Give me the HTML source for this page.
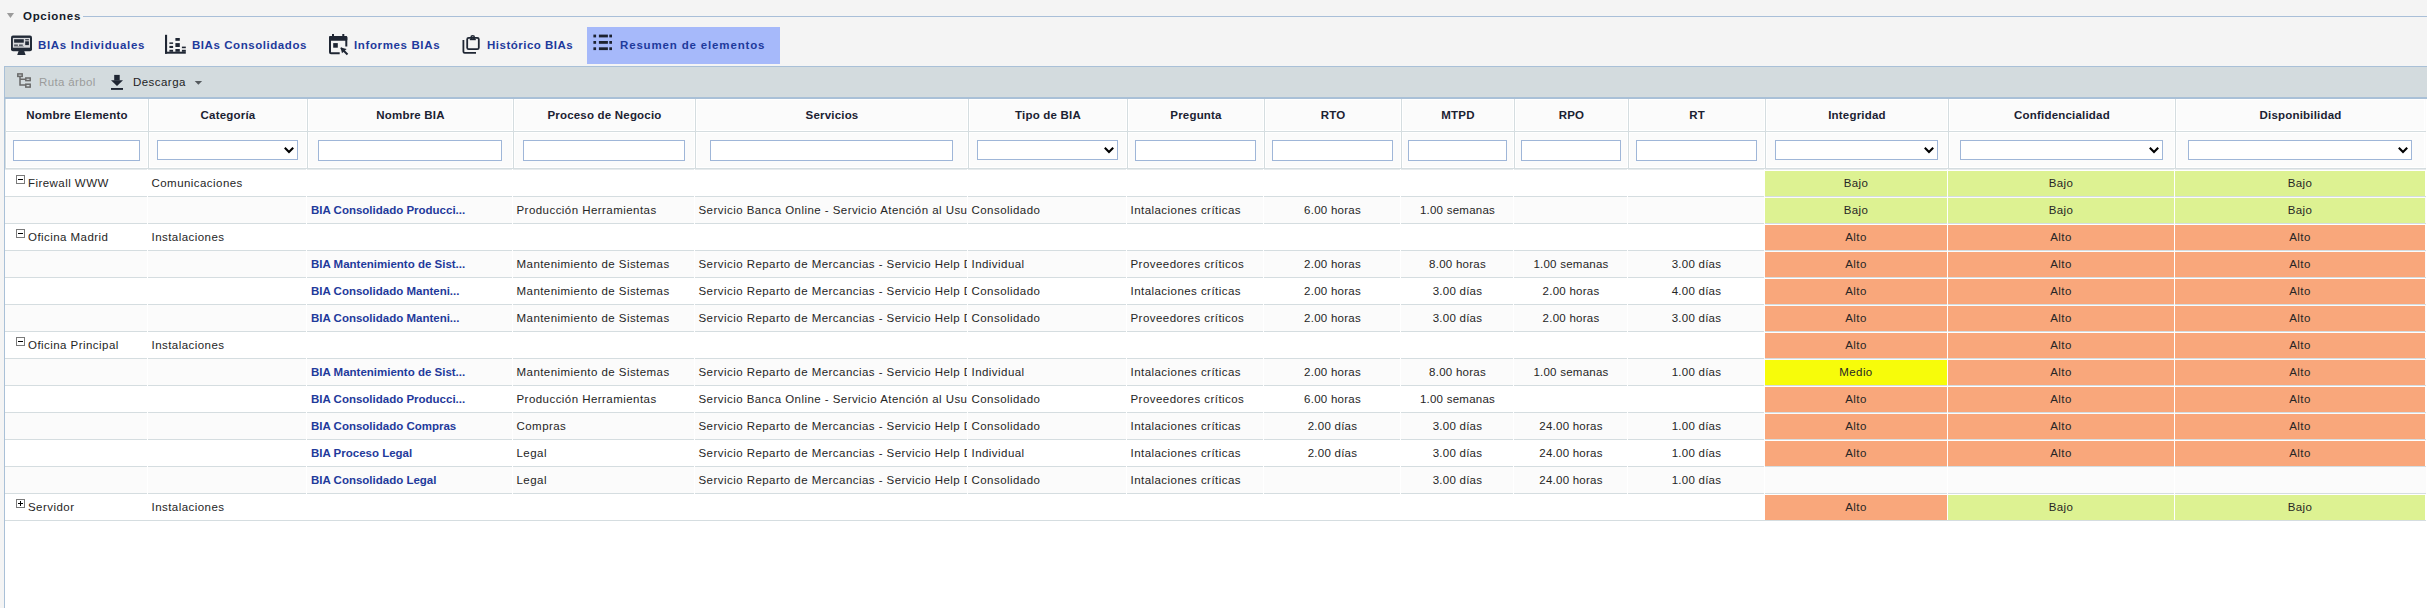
<!DOCTYPE html>
<html><head><meta charset="utf-8"><style>
*{box-sizing:border-box;margin:0;padding:0}
html,body{width:2427px;height:608px;overflow:hidden;background:#f4f4f4;font-family:"Liberation Sans",sans-serif;color:#222}
.abs{position:absolute;white-space:nowrap}
#icons{position:absolute;left:0;top:0;z-index:5}
#leg{position:absolute;left:23px;top:6px;font-size:11.5px;font-weight:bold;color:#141b2b;line-height:20px;letter-spacing:0.7px}
#legline{position:absolute;left:83px;top:16px;right:0;height:1px;background:#a9bfd8}
.tab{position:absolute;top:27px;height:37px;font-size:11.5px;font-weight:bold;color:#1e3a9c;line-height:37px;white-space:nowrap}
#seltab{position:absolute;left:587px;top:27px;width:193px;height:37px;background:#a6b9fa}
#tb{position:absolute;z-index:2;left:4px;top:66px;width:2423px;height:33px;background:#d3dbde;border-top:1px solid #a9c0d7;border-bottom:2px solid #a9c0d7;border-left:1px solid #a9c0d7}
#main{position:absolute;left:4px;top:98px;width:2423px;height:510px;background:#fff;border-left:1px solid #a9c0d7}
.hrow{position:absolute;left:0;top:0;width:2421px;height:34px;background:#fbfbfb;border-bottom:1px solid #d5dde0}
.frow{position:absolute;left:0;top:34px;width:2421px;height:37px;background:#fbfbfb;border-bottom:1px solid #d5dde0}
.hc{position:absolute;top:1px;height:32px;line-height:33px;box-shadow:inset 1px 1px 0 #fff,inset -1px -1px 0 #fff;text-align:center;font-size:11.5px;font-weight:bold;color:#1b2232;letter-spacing:0.2px;border-left:1px solid #d5dde0;white-space:nowrap}
.fb{position:absolute;top:0;height:36px;border-left:1px solid #d5dde0;box-shadow:inset 1px 1px 0 #fff,inset -1px -1px 0 #fff}
.inp,.sel{position:absolute;top:8px;height:21px;background:#fff;border:1px solid #9fb6d8}
.sel{height:20px}
.chev{position:absolute;right:2px;top:5px}
.row{position:absolute;left:0;width:2421px;height:27px;background:#fff;border-top:1px solid #d5dde0}
.row.alt{background:#fbfbfb}.row.first{border-top-color:#e6eaec}
.vl{position:absolute;top:-1px;width:1px;height:27px;background:#fff}
.bc{position:absolute;top:0;height:26px;line-height:26px;font-size:11.5px;padding-left:3.5px;white-space:nowrap;overflow:hidden;color:#252525;letter-spacing:0.45px}
.bc.ctr{text-align:center;padding-left:0;letter-spacing:0.25px}
.bc.lnk{font-weight:bold;color:#1f3a9b;font-size:11.5px;letter-spacing:0;padding-left:4px}
.bc.nm{padding-left:0}
.col{position:absolute;top:1px;height:25px;line-height:25px;text-align:center;font-size:11.5px;color:#262626;letter-spacing:0.4px}
.col.g{background:#ddf292}
.col.o{background:#f9a77b}
.col.y{background:#f7fc0a}
.tgw{position:absolute;top:5px;width:9px;height:9px}
.tg{position:absolute;left:0;top:0;width:9px;height:9px;border:1px solid #7a7a7a;background:#fff}
.tg .h{position:absolute;left:1px;top:3px;width:5px;height:1.3px;background:#000}
.tg .v{position:absolute;left:2.8px;top:1px;width:1.3px;height:5px;background:#000}
</style></head><body>

<svg id="icons" width="2427" height="100" viewBox="0 0 2427 100">
 <!-- monitor -->
 <g fill="#222a37">
  <rect x="11" y="35.6" width="21" height="15.6" rx="2"/>
  <path d="M17.2 55 L25.6 55 L24.2 51 L18.6 51 Z"/>
 </g>
 <rect x="12.9" y="37.9" width="17.1" height="9.8" fill="#d9dadd"/>
 <g fill="#222a37">
  <rect x="14.1" y="39.2" width="9.7" height="3.5"/>
  <rect x="25.2" y="39.2" width="3.7" height="1.1"/>
  <rect x="25.2" y="41.3" width="3.7" height="3.8"/>
  <rect x="14.1" y="44.6" width="3.8" height="1.1"/>
  <rect x="19" y="44.6" width="3.8" height="1.1"/>
  <rect x="14.1" y="46.3" width="9.7" height="0.6" opacity="0.5"/>
 </g>
 <!-- bar chart -->
 <g fill="#1f2633">
  <rect x="165" y="34.8" width="2.1" height="18.9"/>
  <rect x="165" y="51.7" width="20.8" height="2"/>
  <rect x="169.4" y="42.4" width="3.7" height="1.5"/>
  <rect x="169.4" y="45.9" width="3.7" height="2.1"/>
  <rect x="169.4" y="49.8" width="3.7" height="2"/>
  <rect x="175.4" y="38" width="4.4" height="2.8"/>
  <rect x="175.4" y="43.1" width="4.4" height="3.9"/>
  <rect x="175.4" y="49" width="4.4" height="2.8"/>
  <rect x="181.9" y="46.6" width="3.9" height="1.6"/>
  <rect x="181.9" y="49.8" width="3.9" height="2"/>
 </g>
 <!-- calendar -->
 <g fill="none" stroke="#1f2633" stroke-width="2">
  <path d="M339.7 53.2 L331 53.2 Q330 53.2 330 52.2 L330 38 Q330 37 331 37 L345.3 37 Q346.3 37 346.3 38 L346.3 46.6"/>
  <path d="M341 48 L347.5 54.5" stroke-width="2"/>
 </g>
 <g fill="#1f2633">
  <rect x="329" y="36" width="18.3" height="4.8" rx="1.2"/>
  <rect x="332" y="34" width="2" height="3"/>
  <rect x="342.3" y="34" width="2" height="3"/>
  <rect x="333.2" y="43.1" width="4.6" height="4.6"/>
  <path d="M340.6 47.4 L346.6 48.9 L342 53.2 Z"/>
 </g>
 <!-- clipboard -->
 <g fill="none" stroke="#1f2633" stroke-width="1.8">
  <rect x="467.2" y="37.8" width="11.6" height="11.4" rx="1.5"/>
  <path d="M463.4 40.1 L463.4 51.6 Q463.4 52.9 464.7 52.9 L476 52.9"/>
  <circle cx="472.7" cy="37.5" r="1.75" stroke-width="1.4"/>
 </g>
 <rect x="469.8" y="38.8" width="6" height="1.4" fill="#1f2633"/>
 <!-- list -->
 <g fill="#1c2230">
  <rect x="593.4" y="34.6" width="2.7" height="2.8"/>
  <rect x="598.9" y="34.6" width="9" height="2.8"/>
  <rect x="609.3" y="34.6" width="2.7" height="2.8"/>
  <rect x="593.4" y="41" width="2.7" height="2.8"/>
  <rect x="598.9" y="41" width="9" height="2.8"/>
  <rect x="609.3" y="41" width="2.7" height="2.8"/>
  <rect x="593.4" y="47.3" width="2.7" height="2.8"/>
  <rect x="598.9" y="47.3" width="9" height="2.8"/>
  <rect x="609.3" y="47.3" width="2.7" height="2.8"/>
 </g>
 <!-- tree -->
 <g fill="none" stroke="#6a6a6a" stroke-width="1.5">
  <rect x="17.8" y="73.9" width="4.4" height="2.5"/>
  <rect x="25.8" y="78" width="4.4" height="2.6"/>
  <rect x="25.8" y="84.2" width="4.4" height="2.9"/>
  <path d="M20 76.5 L20 85 L25.5 85 M20 79.2 L25.5 79.2"/>
 </g>
 <!-- download -->
 <g fill="#1f2633">
  <rect x="114.2" y="74.9" width="5.5" height="5.6"/>
  <path d="M111 80.2 L123 80.2 L117 86 Z"/>
  <rect x="111" y="88" width="12" height="1.9"/>
 </g>
 <path d="M194.7 81.1 L202.1 81.1 L198.4 84.8 Z" fill="#555a5e"/>
 <!-- legend triangle -->
 <path d="M6.9 13.1 L14 13.1 L10.45 18 Z" fill="#9b9b9b"/>
</svg>

<div id="leg">Opciones</div>
<div id="legline"></div>
<div id="seltab"></div>
<div class="tab" style="left:38px;letter-spacing:0.66px">BIAs Individuales</div>
<div class="tab" style="left:192px;letter-spacing:0.56px">BIAs Consolidados</div>
<div class="tab" style="left:354px;letter-spacing:0.63px">Informes BIAs</div>
<div class="tab" style="left:487px;letter-spacing:0.5px">Histórico BIAs</div>
<div class="tab" style="left:620px;letter-spacing:0.84px">Resumen de elementos</div>
<div id="tb">
 <div class="abs" style="left:34px;top:7px;font-size:11.5px;color:#9b9b9b;line-height:16px;letter-spacing:0.35px">Ruta árbol</div>
 <div class="abs" style="left:128px;top:7px;font-size:11.5px;color:#1e1e1e;line-height:16px;letter-spacing:0.45px">Descarga</div>
</div>
<div id="main">
<div class="hrow"><div class="hc" style="left:0px;width:143px">Nombre Elemento</div><div class="hc" style="left:143px;width:159px">Categoría</div><div class="hc" style="left:302px;width:206px">Nombre BIA</div><div class="hc" style="left:508px;width:182px">Proceso de Negocio</div><div class="hc" style="left:690px;width:273px">Servicios</div><div class="hc" style="left:963px;width:159px">Tipo de BIA</div><div class="hc" style="left:1122px;width:137px">Pregunta</div><div class="hc" style="left:1259px;width:137px">RTO</div><div class="hc" style="left:1396px;width:113px">MTPD</div><div class="hc" style="left:1509px;width:114px">RPO</div><div class="hc" style="left:1623px;width:137px">RT</div><div class="hc" style="left:1760px;width:183px">Integridad</div><div class="hc" style="left:1943px;width:227px">Confidencialidad</div><div class="hc" style="left:2170px;width:250px">Disponibilidad</div></div>
<div class="frow"><div class="fb" style="left:0px;width:143px"></div><div class="fb" style="left:143px;width:159px"></div><div class="fb" style="left:302px;width:206px"></div><div class="fb" style="left:508px;width:182px"></div><div class="fb" style="left:690px;width:273px"></div><div class="fb" style="left:963px;width:159px"></div><div class="fb" style="left:1122px;width:137px"></div><div class="fb" style="left:1259px;width:137px"></div><div class="fb" style="left:1396px;width:113px"></div><div class="fb" style="left:1509px;width:114px"></div><div class="fb" style="left:1623px;width:137px"></div><div class="fb" style="left:1760px;width:183px"></div><div class="fb" style="left:1943px;width:227px"></div><div class="fb" style="left:2170px;width:250px"></div><div class="inp" style="left:8px;width:127px"></div><div class="sel" style="left:152px;width:141px"><svg class="chev" width="12" height="9" viewBox="0 0 12 9"><path d="M1.8 1.8 L6 6 L10.2 1.8" fill="none" stroke="#000" stroke-width="2.1"/></svg></div><div class="inp" style="left:313px;width:184px"></div><div class="inp" style="left:518px;width:162px"></div><div class="inp" style="left:705px;width:243px"></div><div class="sel" style="left:972px;width:141px"><svg class="chev" width="12" height="9" viewBox="0 0 12 9"><path d="M1.8 1.8 L6 6 L10.2 1.8" fill="none" stroke="#000" stroke-width="2.1"/></svg></div><div class="inp" style="left:1130px;width:121px"></div><div class="inp" style="left:1267px;width:121px"></div><div class="inp" style="left:1403px;width:99px"></div><div class="inp" style="left:1516px;width:100px"></div><div class="inp" style="left:1631px;width:121px"></div><div class="sel" style="left:1770px;width:163px"><svg class="chev" width="12" height="9" viewBox="0 0 12 9"><path d="M1.8 1.8 L6 6 L10.2 1.8" fill="none" stroke="#000" stroke-width="2.1"/></svg></div><div class="sel" style="left:1955px;width:203px"><svg class="chev" width="12" height="9" viewBox="0 0 12 9"><path d="M1.8 1.8 L6 6 L10.2 1.8" fill="none" stroke="#000" stroke-width="2.1"/></svg></div><div class="sel" style="left:2183px;width:224px"><svg class="chev" width="12" height="9" viewBox="0 0 12 9"><path d="M1.8 1.8 L6 6 L10.2 1.8" fill="none" stroke="#000" stroke-width="2.1"/></svg></div></div>
<div class="row first" style="top:71px"><div class="tgw" style="left:11px"><i class="tg"><b class="h"></b></i></div><div class="bc nm" style="left:23px;width:121px">Firewall WWW</div><div class="bc" style="left:143px;width:159px">Comunicaciones</div><div class="col g" style="left:1760px;width:182px">Bajo</div><div class="col g" style="left:1943px;width:226px">Bajo</div><div class="col g" style="left:2170px;width:250px">Bajo</div><div class="vl" style="left:142px"></div><div class="vl" style="left:301px"></div><div class="vl" style="left:507px"></div><div class="vl" style="left:689px"></div><div class="vl" style="left:962px"></div><div class="vl" style="left:1121px"></div><div class="vl" style="left:1258px"></div><div class="vl" style="left:1395px"></div><div class="vl" style="left:1508px"></div><div class="vl" style="left:1622px"></div><div class="vl" style="left:1759px"></div><div class="vl" style="left:1942px"></div><div class="vl" style="left:2169px"></div></div><div class="row alt" style="top:98px"><div class="bc lnk" style="left:302px;width:206px">BIA Consolidado Producci...</div><div class="bc" style="left:508px;width:182px">Producción Herramientas</div><div class="bc" style="left:690px;width:273px">Servicio Banca Online - Servicio Atención al Usuario</div><div class="bc" style="left:963px;width:159px">Consolidado</div><div class="bc" style="left:1122px;width:137px">Intalaciones críticas</div><div class="bc ctr" style="left:1259px;width:137px">6.00 horas</div><div class="bc ctr" style="left:1396px;width:113px">1.00 semanas</div><div class="col g" style="left:1760px;width:182px">Bajo</div><div class="col g" style="left:1943px;width:226px">Bajo</div><div class="col g" style="left:2170px;width:250px">Bajo</div><div class="vl" style="left:142px"></div><div class="vl" style="left:301px"></div><div class="vl" style="left:507px"></div><div class="vl" style="left:689px"></div><div class="vl" style="left:962px"></div><div class="vl" style="left:1121px"></div><div class="vl" style="left:1258px"></div><div class="vl" style="left:1395px"></div><div class="vl" style="left:1508px"></div><div class="vl" style="left:1622px"></div><div class="vl" style="left:1759px"></div><div class="vl" style="left:1942px"></div><div class="vl" style="left:2169px"></div></div><div class="row" style="top:125px"><div class="tgw" style="left:11px"><i class="tg"><b class="h"></b></i></div><div class="bc nm" style="left:23px;width:121px">Oficina Madrid</div><div class="bc" style="left:143px;width:159px">Instalaciones</div><div class="col o" style="left:1760px;width:182px">Alto</div><div class="col o" style="left:1943px;width:226px">Alto</div><div class="col o" style="left:2170px;width:250px">Alto</div><div class="vl" style="left:142px"></div><div class="vl" style="left:301px"></div><div class="vl" style="left:507px"></div><div class="vl" style="left:689px"></div><div class="vl" style="left:962px"></div><div class="vl" style="left:1121px"></div><div class="vl" style="left:1258px"></div><div class="vl" style="left:1395px"></div><div class="vl" style="left:1508px"></div><div class="vl" style="left:1622px"></div><div class="vl" style="left:1759px"></div><div class="vl" style="left:1942px"></div><div class="vl" style="left:2169px"></div></div><div class="row alt" style="top:152px"><div class="bc lnk" style="left:302px;width:206px">BIA Mantenimiento de Sist...</div><div class="bc" style="left:508px;width:182px">Mantenimiento de Sistemas</div><div class="bc" style="left:690px;width:273px">Servicio Reparto de Mercancias - Servicio Help Desk - Servicio Atención</div><div class="bc" style="left:963px;width:159px">Individual</div><div class="bc" style="left:1122px;width:137px">Proveedores críticos</div><div class="bc ctr" style="left:1259px;width:137px">2.00 horas</div><div class="bc ctr" style="left:1396px;width:113px">8.00 horas</div><div class="bc ctr" style="left:1509px;width:114px">1.00 semanas</div><div class="bc ctr" style="left:1623px;width:137px">3.00 días</div><div class="col o" style="left:1760px;width:182px">Alto</div><div class="col o" style="left:1943px;width:226px">Alto</div><div class="col o" style="left:2170px;width:250px">Alto</div><div class="vl" style="left:142px"></div><div class="vl" style="left:301px"></div><div class="vl" style="left:507px"></div><div class="vl" style="left:689px"></div><div class="vl" style="left:962px"></div><div class="vl" style="left:1121px"></div><div class="vl" style="left:1258px"></div><div class="vl" style="left:1395px"></div><div class="vl" style="left:1508px"></div><div class="vl" style="left:1622px"></div><div class="vl" style="left:1759px"></div><div class="vl" style="left:1942px"></div><div class="vl" style="left:2169px"></div></div><div class="row" style="top:179px"><div class="bc lnk" style="left:302px;width:206px">BIA Consolidado Manteni...</div><div class="bc" style="left:508px;width:182px">Mantenimiento de Sistemas</div><div class="bc" style="left:690px;width:273px">Servicio Reparto de Mercancias - Servicio Help Desk - Servicio Atención</div><div class="bc" style="left:963px;width:159px">Consolidado</div><div class="bc" style="left:1122px;width:137px">Intalaciones críticas</div><div class="bc ctr" style="left:1259px;width:137px">2.00 horas</div><div class="bc ctr" style="left:1396px;width:113px">3.00 días</div><div class="bc ctr" style="left:1509px;width:114px">2.00 horas</div><div class="bc ctr" style="left:1623px;width:137px">4.00 días</div><div class="col o" style="left:1760px;width:182px">Alto</div><div class="col o" style="left:1943px;width:226px">Alto</div><div class="col o" style="left:2170px;width:250px">Alto</div><div class="vl" style="left:142px"></div><div class="vl" style="left:301px"></div><div class="vl" style="left:507px"></div><div class="vl" style="left:689px"></div><div class="vl" style="left:962px"></div><div class="vl" style="left:1121px"></div><div class="vl" style="left:1258px"></div><div class="vl" style="left:1395px"></div><div class="vl" style="left:1508px"></div><div class="vl" style="left:1622px"></div><div class="vl" style="left:1759px"></div><div class="vl" style="left:1942px"></div><div class="vl" style="left:2169px"></div></div><div class="row alt" style="top:206px"><div class="bc lnk" style="left:302px;width:206px">BIA Consolidado Manteni...</div><div class="bc" style="left:508px;width:182px">Mantenimiento de Sistemas</div><div class="bc" style="left:690px;width:273px">Servicio Reparto de Mercancias - Servicio Help Desk - Servicio Atención</div><div class="bc" style="left:963px;width:159px">Consolidado</div><div class="bc" style="left:1122px;width:137px">Proveedores críticos</div><div class="bc ctr" style="left:1259px;width:137px">2.00 horas</div><div class="bc ctr" style="left:1396px;width:113px">3.00 días</div><div class="bc ctr" style="left:1509px;width:114px">2.00 horas</div><div class="bc ctr" style="left:1623px;width:137px">3.00 días</div><div class="col o" style="left:1760px;width:182px">Alto</div><div class="col o" style="left:1943px;width:226px">Alto</div><div class="col o" style="left:2170px;width:250px">Alto</div><div class="vl" style="left:142px"></div><div class="vl" style="left:301px"></div><div class="vl" style="left:507px"></div><div class="vl" style="left:689px"></div><div class="vl" style="left:962px"></div><div class="vl" style="left:1121px"></div><div class="vl" style="left:1258px"></div><div class="vl" style="left:1395px"></div><div class="vl" style="left:1508px"></div><div class="vl" style="left:1622px"></div><div class="vl" style="left:1759px"></div><div class="vl" style="left:1942px"></div><div class="vl" style="left:2169px"></div></div><div class="row" style="top:233px"><div class="tgw" style="left:11px"><i class="tg"><b class="h"></b></i></div><div class="bc nm" style="left:23px;width:121px">Oficina Principal</div><div class="bc" style="left:143px;width:159px">Instalaciones</div><div class="col o" style="left:1760px;width:182px">Alto</div><div class="col o" style="left:1943px;width:226px">Alto</div><div class="col o" style="left:2170px;width:250px">Alto</div><div class="vl" style="left:142px"></div><div class="vl" style="left:301px"></div><div class="vl" style="left:507px"></div><div class="vl" style="left:689px"></div><div class="vl" style="left:962px"></div><div class="vl" style="left:1121px"></div><div class="vl" style="left:1258px"></div><div class="vl" style="left:1395px"></div><div class="vl" style="left:1508px"></div><div class="vl" style="left:1622px"></div><div class="vl" style="left:1759px"></div><div class="vl" style="left:1942px"></div><div class="vl" style="left:2169px"></div></div><div class="row alt" style="top:260px"><div class="bc lnk" style="left:302px;width:206px">BIA Mantenimiento de Sist...</div><div class="bc" style="left:508px;width:182px">Mantenimiento de Sistemas</div><div class="bc" style="left:690px;width:273px">Servicio Reparto de Mercancias - Servicio Help Desk - Servicio Atención</div><div class="bc" style="left:963px;width:159px">Individual</div><div class="bc" style="left:1122px;width:137px">Intalaciones críticas</div><div class="bc ctr" style="left:1259px;width:137px">2.00 horas</div><div class="bc ctr" style="left:1396px;width:113px">8.00 horas</div><div class="bc ctr" style="left:1509px;width:114px">1.00 semanas</div><div class="bc ctr" style="left:1623px;width:137px">1.00 días</div><div class="col y" style="left:1760px;width:182px">Medio</div><div class="col o" style="left:1943px;width:226px">Alto</div><div class="col o" style="left:2170px;width:250px">Alto</div><div class="vl" style="left:142px"></div><div class="vl" style="left:301px"></div><div class="vl" style="left:507px"></div><div class="vl" style="left:689px"></div><div class="vl" style="left:962px"></div><div class="vl" style="left:1121px"></div><div class="vl" style="left:1258px"></div><div class="vl" style="left:1395px"></div><div class="vl" style="left:1508px"></div><div class="vl" style="left:1622px"></div><div class="vl" style="left:1759px"></div><div class="vl" style="left:1942px"></div><div class="vl" style="left:2169px"></div></div><div class="row" style="top:287px"><div class="bc lnk" style="left:302px;width:206px">BIA Consolidado Producci...</div><div class="bc" style="left:508px;width:182px">Producción Herramientas</div><div class="bc" style="left:690px;width:273px">Servicio Banca Online - Servicio Atención al Usuario</div><div class="bc" style="left:963px;width:159px">Consolidado</div><div class="bc" style="left:1122px;width:137px">Proveedores críticos</div><div class="bc ctr" style="left:1259px;width:137px">6.00 horas</div><div class="bc ctr" style="left:1396px;width:113px">1.00 semanas</div><div class="col o" style="left:1760px;width:182px">Alto</div><div class="col o" style="left:1943px;width:226px">Alto</div><div class="col o" style="left:2170px;width:250px">Alto</div><div class="vl" style="left:142px"></div><div class="vl" style="left:301px"></div><div class="vl" style="left:507px"></div><div class="vl" style="left:689px"></div><div class="vl" style="left:962px"></div><div class="vl" style="left:1121px"></div><div class="vl" style="left:1258px"></div><div class="vl" style="left:1395px"></div><div class="vl" style="left:1508px"></div><div class="vl" style="left:1622px"></div><div class="vl" style="left:1759px"></div><div class="vl" style="left:1942px"></div><div class="vl" style="left:2169px"></div></div><div class="row alt" style="top:314px"><div class="bc lnk" style="left:302px;width:206px">BIA Consolidado Compras</div><div class="bc" style="left:508px;width:182px">Compras</div><div class="bc" style="left:690px;width:273px">Servicio Reparto de Mercancias - Servicio Help Desk - Servicio Atención</div><div class="bc" style="left:963px;width:159px">Consolidado</div><div class="bc" style="left:1122px;width:137px">Intalaciones críticas</div><div class="bc ctr" style="left:1259px;width:137px">2.00 días</div><div class="bc ctr" style="left:1396px;width:113px">3.00 días</div><div class="bc ctr" style="left:1509px;width:114px">24.00 horas</div><div class="bc ctr" style="left:1623px;width:137px">1.00 días</div><div class="col o" style="left:1760px;width:182px">Alto</div><div class="col o" style="left:1943px;width:226px">Alto</div><div class="col o" style="left:2170px;width:250px">Alto</div><div class="vl" style="left:142px"></div><div class="vl" style="left:301px"></div><div class="vl" style="left:507px"></div><div class="vl" style="left:689px"></div><div class="vl" style="left:962px"></div><div class="vl" style="left:1121px"></div><div class="vl" style="left:1258px"></div><div class="vl" style="left:1395px"></div><div class="vl" style="left:1508px"></div><div class="vl" style="left:1622px"></div><div class="vl" style="left:1759px"></div><div class="vl" style="left:1942px"></div><div class="vl" style="left:2169px"></div></div><div class="row" style="top:341px"><div class="bc lnk" style="left:302px;width:206px">BIA Proceso Legal</div><div class="bc" style="left:508px;width:182px">Legal</div><div class="bc" style="left:690px;width:273px">Servicio Reparto de Mercancias - Servicio Help Desk - Servicio Atención</div><div class="bc" style="left:963px;width:159px">Individual</div><div class="bc" style="left:1122px;width:137px">Intalaciones críticas</div><div class="bc ctr" style="left:1259px;width:137px">2.00 días</div><div class="bc ctr" style="left:1396px;width:113px">3.00 días</div><div class="bc ctr" style="left:1509px;width:114px">24.00 horas</div><div class="bc ctr" style="left:1623px;width:137px">1.00 días</div><div class="col o" style="left:1760px;width:182px">Alto</div><div class="col o" style="left:1943px;width:226px">Alto</div><div class="col o" style="left:2170px;width:250px">Alto</div><div class="vl" style="left:142px"></div><div class="vl" style="left:301px"></div><div class="vl" style="left:507px"></div><div class="vl" style="left:689px"></div><div class="vl" style="left:962px"></div><div class="vl" style="left:1121px"></div><div class="vl" style="left:1258px"></div><div class="vl" style="left:1395px"></div><div class="vl" style="left:1508px"></div><div class="vl" style="left:1622px"></div><div class="vl" style="left:1759px"></div><div class="vl" style="left:1942px"></div><div class="vl" style="left:2169px"></div></div><div class="row alt" style="top:368px"><div class="bc lnk" style="left:302px;width:206px">BIA Consolidado Legal</div><div class="bc" style="left:508px;width:182px">Legal</div><div class="bc" style="left:690px;width:273px">Servicio Reparto de Mercancias - Servicio Help Desk - Servicio Atención</div><div class="bc" style="left:963px;width:159px">Consolidado</div><div class="bc" style="left:1122px;width:137px">Intalaciones críticas</div><div class="bc ctr" style="left:1396px;width:113px">3.00 días</div><div class="bc ctr" style="left:1509px;width:114px">24.00 horas</div><div class="bc ctr" style="left:1623px;width:137px">1.00 días</div><div class="vl" style="left:142px"></div><div class="vl" style="left:301px"></div><div class="vl" style="left:507px"></div><div class="vl" style="left:689px"></div><div class="vl" style="left:962px"></div><div class="vl" style="left:1121px"></div><div class="vl" style="left:1258px"></div><div class="vl" style="left:1395px"></div><div class="vl" style="left:1508px"></div><div class="vl" style="left:1622px"></div><div class="vl" style="left:1759px"></div><div class="vl" style="left:1942px"></div><div class="vl" style="left:2169px"></div></div><div class="row" style="top:395px"><div class="tgw" style="left:11px"><i class="tg"><b class="h"></b><b class="v"></b></i></div><div class="bc nm" style="left:23px;width:121px">Servidor</div><div class="bc" style="left:143px;width:159px">Instalaciones</div><div class="col o" style="left:1760px;width:182px">Alto</div><div class="col g" style="left:1943px;width:226px">Bajo</div><div class="col g" style="left:2170px;width:250px">Bajo</div><div class="vl" style="left:142px"></div><div class="vl" style="left:301px"></div><div class="vl" style="left:507px"></div><div class="vl" style="left:689px"></div><div class="vl" style="left:962px"></div><div class="vl" style="left:1121px"></div><div class="vl" style="left:1258px"></div><div class="vl" style="left:1395px"></div><div class="vl" style="left:1508px"></div><div class="vl" style="left:1622px"></div><div class="vl" style="left:1759px"></div><div class="vl" style="left:1942px"></div><div class="vl" style="left:2169px"></div></div>
<div style="position:absolute;left:0;top:422px;width:2421px;height:1px;background:#d5dde0"></div>
</div>
</body></html>
